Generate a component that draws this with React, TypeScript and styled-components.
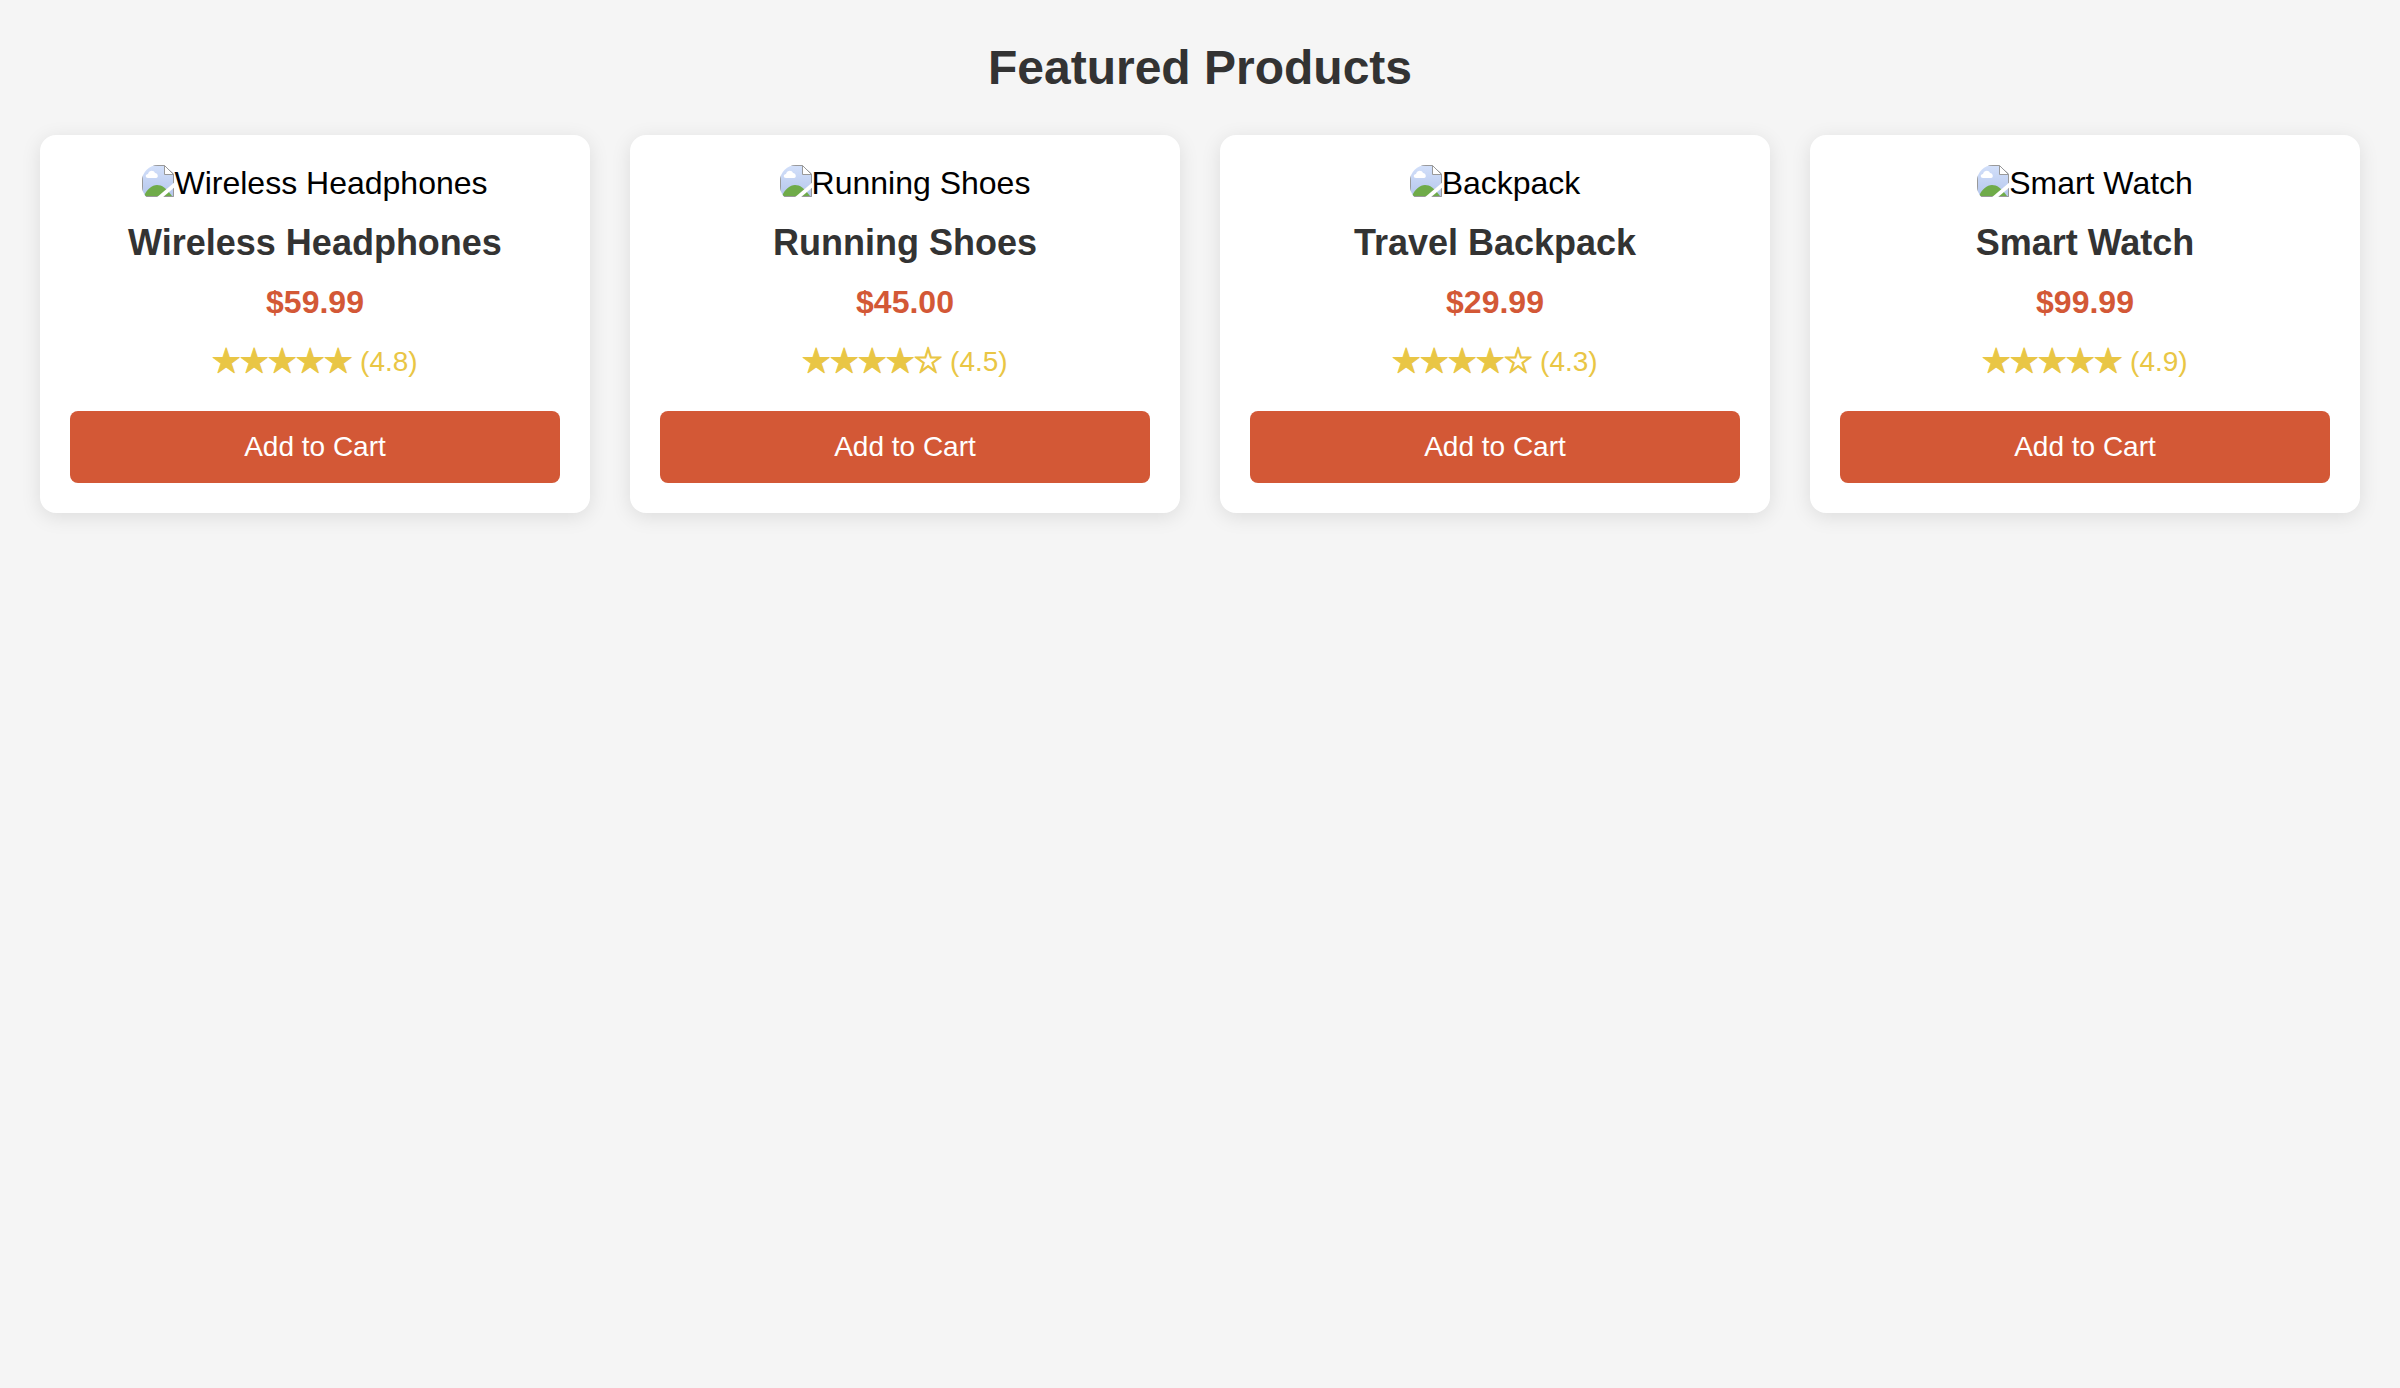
import React from "react";
import styled, { createGlobalStyle } from "styled-components";

const GlobalStyle = createGlobalStyle`
  * {
    box-sizing: border-box;
  }

  body {
    margin: 0;
    background: #f5f5f5;
    font-family: "Liberation Sans", Arial, Helvetica, sans-serif;
  }
`;

const Page = styled.main`
  padding: 40px;
`;

const Heading = styled.h1`
  margin: 0 0 40px;
  color: #333;
  font-size: 48px;
  line-height: 55px;
  text-align: center;
`;

const Grid = styled.section`
  display: grid;
  grid-template-columns: repeat(auto-fit, minmax(440px, 1fr));
  gap: 40px;
`;

const Card = styled.article`
  padding: 30px;
  border-radius: 16px;
  background: #fff;
  box-shadow: 0 4px 20px rgba(0, 0, 0, 0.1);
  text-align: center;
`;

const Thumbnail = styled.div`
  display: flex;
  justify-content: center;
  margin-bottom: 20px;
  color: #000;
  font-size: 32px;
  line-height: 37px;
`;

const ThumbnailIcon = styled.svg`
  flex: none;
  width: 32px;
  height: 37px;
  border-radius: 16px 0 0 16px;
`;

const Name = styled.h2`
  margin: 0 0 20px;
  color: #333;
  font-size: 36px;
  line-height: 41px;
`;

const Price = styled.p`
  margin: 0 0 20px;
  color: #d35836;
  font-size: 32px;
  font-weight: bold;
  line-height: 38px;
`;

const Rating = styled.p`
  margin: 0 0 28px;
  color: #e9c645;
  font-size: 28px;
  line-height: 42px;
`;

const Stars = styled.span`
  font-family: "Noto Sans CJK JP", sans-serif;
  line-height: 28px;
  -webkit-text-stroke: 1px currentColor;
`;

const CartButton = styled.button`
  display: block;
  width: 100%;
  padding: 20px;
  border: 0;
  border-radius: 8px;
  background: #d35836;
  color: #fff;
  font-family: inherit;
  font-size: 28px;
  line-height: 32px;
  cursor: pointer;
`;

interface Product {
  name: string;
  alt: string;
  price: string;
  stars: string;
  score: string;
}

const products: Product[] = [
  { name: "Wireless Headphones", alt: "Wireless Headphones", price: "$59.99", stars: "★★★★★", score: "4.8" },
  { name: "Running Shoes", alt: "Running Shoes", price: "$45.00", stars: "★★★★☆", score: "4.5" },
  { name: "Travel Backpack", alt: "Backpack", price: "$29.99", stars: "★★★★☆", score: "4.3" },
  { name: "Smart Watch", alt: "Smart Watch", price: "$99.99", stars: "★★★★★", score: "4.9" },
];

function MissingPicture() {
  return (
    <ThumbnailIcon viewBox="0 0 32 37" aria-hidden="true">
      <defs>
        <linearGradient id="sky" x1="0" y1="0" x2="0" y2="1">
          <stop offset="0" stopColor="#d3e0fa" />
          <stop offset="1" stopColor="#b4c6ec" />
        </linearGradient>
      </defs>
      <path d="M0 0H22L32 9V32H0Z" fill="url(#sky)" />
      <path d="M2 31C5 24 10 20 15 20C20 20 24 23 30 31Z" fill="#6fab49" />
      <path
        d="M6 13C3 13 3 9 6 9C7 5 12 5 13 8C16 8 17 13 14 13Z"
        fill="#fff"
      />
      <path d="M0.5 0.5H22L31.5 9V31.5H0.5Z" fill="none" stroke="#999" strokeWidth="1" />
      <path d="M22.5 0.5V9.5H31.5Z" fill="#fff" stroke="#999" strokeWidth="1" />
      <path d="M33 17L14 33H20L33 22Z" fill="#fff" />
    </ThumbnailIcon>
  );
}

function ProductCard({ product }: { product: Product }) {
  return (
    <Card>
      <Thumbnail>
        <MissingPicture />
        <span>{product.alt}</span>
      </Thumbnail>
      <Name>{product.name}</Name>
      <Price>{product.price}</Price>
      <Rating>
        <Stars>{product.stars}</Stars> ({product.score})
      </Rating>
      <CartButton type="button">Add to Cart</CartButton>
    </Card>
  );
}

export default function App() {
  return (
    <>
      <GlobalStyle />
      <Page>
        <Heading>Featured Products</Heading>
        <Grid>
          {products.map((product) => (
            <ProductCard key={product.name} product={product} />
          ))}
        </Grid>
      </Page>
    </>
  );
}
